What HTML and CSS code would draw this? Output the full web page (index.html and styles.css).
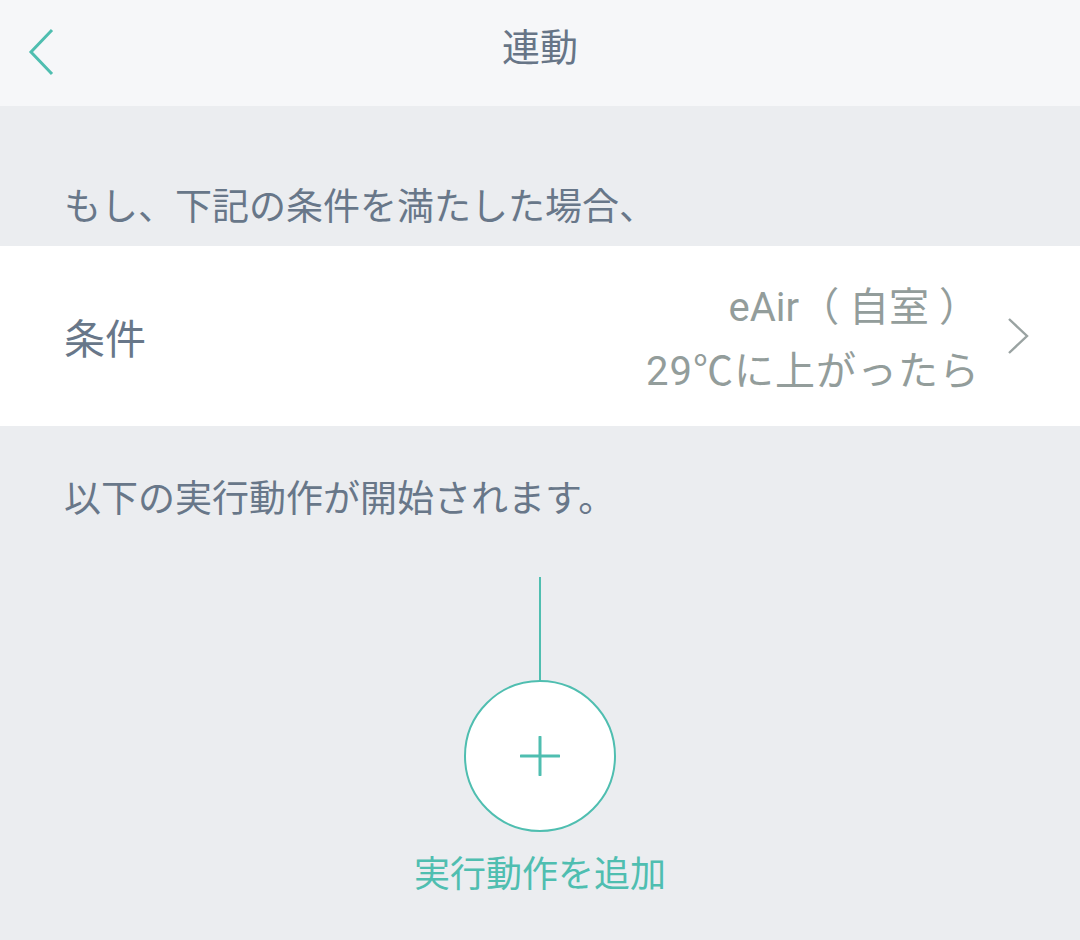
FILE: index.html
```html
<!DOCTYPE html>
<html lang="ja">
<head>
<meta charset="utf-8">
<title>連動</title>
<link rel="stylesheet" href="styles.css">
</head>
<body>
<div class="screen">
  <header class="topbar">
    <svg class="back" width="30" height="50" viewBox="0 0 30 50"><polyline points="25,3 4,25 25,47" fill="none" stroke="#4fbeb0" stroke-width="3"/></svg>
    <h1 class="title">連動</h1>
  </header>
  <div class="section-label first">もし、下記の条件を満たした場合、</div>
  <div class="cond-row">
    <div class="cond-name">条件</div>
    <div class="cond-value">
      <div class="cond-text">
        <div>eAir（ 自室 ）</div>
        <div class="wide">29℃に上がったら</div>
      </div>
      <svg class="chev" width="24" height="40" viewBox="0 0 24 40"><polyline points="3,3 21,20 3,37" fill="none" stroke="#9aa3a2" stroke-width="2.4"/></svg>
    </div>
  </div>
  <div class="section-label second">以下の実行動作が開始されます。</div>
  <div class="action">
    <div class="stem"></div>
    <button class="add-btn" type="button">
      <svg width="40" height="40" viewBox="0 0 40 40"><path d="M20 1v38M1 20h38" stroke="#4fbeb0" stroke-width="3" stroke-linecap="round"/></svg>
    </button>
    <div class="add-label">実行動作を追加</div>
  </div>
</div>
</body>
</html>
```

FILE: styles.css
```css
html, body {
  margin: 0;
  padding: 0;
}
body {
  width: 1080px;
  height: 940px;
  background: #ebedf0;
  font-family: Roboto, "Noto Sans CJK JP", sans-serif;
  overflow: hidden;
}
.screen {
  display: flex;
  flex-direction: column;
}
.topbar {
  height: 106px;
  background: #f6f7f9;
  display: flex;
  align-items: center;
  justify-content: center;
  position: relative;
}
.back {
  position: absolute;
  left: 27px;
  top: 27px;
}
.title {
  margin: 0;
  font-size: 38px;
  font-weight: 400;
  color: #677587;
  line-height: 1;
  transform: translateY(-5px);
}
.section-label {
  height: 76px;
  line-height: 76px;
  padding-left: 64px;
  font-size: 37px;
  color: #687789;
}
.section-label.first {
  margin-top: 64px;
}
.section-label.second {
  margin-top: 36px;
}
.cond-row {
  height: 180px;
  background: #ffffff;
  display: flex;
  align-items: center;
  justify-content: space-between;
  padding: 0 50px 0 64px;
}
.cond-name {
  font-size: 41px;
  color: #687789;
}
.cond-value {
  display: flex;
  align-items: center;
  gap: 27px;
}
.cond-text {
  text-align: right;
  font-size: 40px;
  line-height: 64px;
  padding-top: 8px;
  color: #939d9b;
}
.cond-text .wide {
  letter-spacing: 1px;
  margin-right: -1px;
}
.chev {
  margin-top: 0;
}
.action {
  display: flex;
  flex-direction: column;
  align-items: center;
  margin-top: 39px;
}
.stem {
  width: 2px;
  height: 103px;
  background: #4fbeb0;
}
.add-btn {
  width: 152px;
  height: 152px;
  border-radius: 50%;
  border: 2px solid #4fbeb0;
  background: #ffffff;
  display: flex;
  align-items: center;
  justify-content: center;
  padding: 0;
  box-sizing: border-box;
}
.add-label {
  margin-top: 19px;
  font-size: 36px;
  line-height: 48px;
  color: #4fbeb0;
}
```
